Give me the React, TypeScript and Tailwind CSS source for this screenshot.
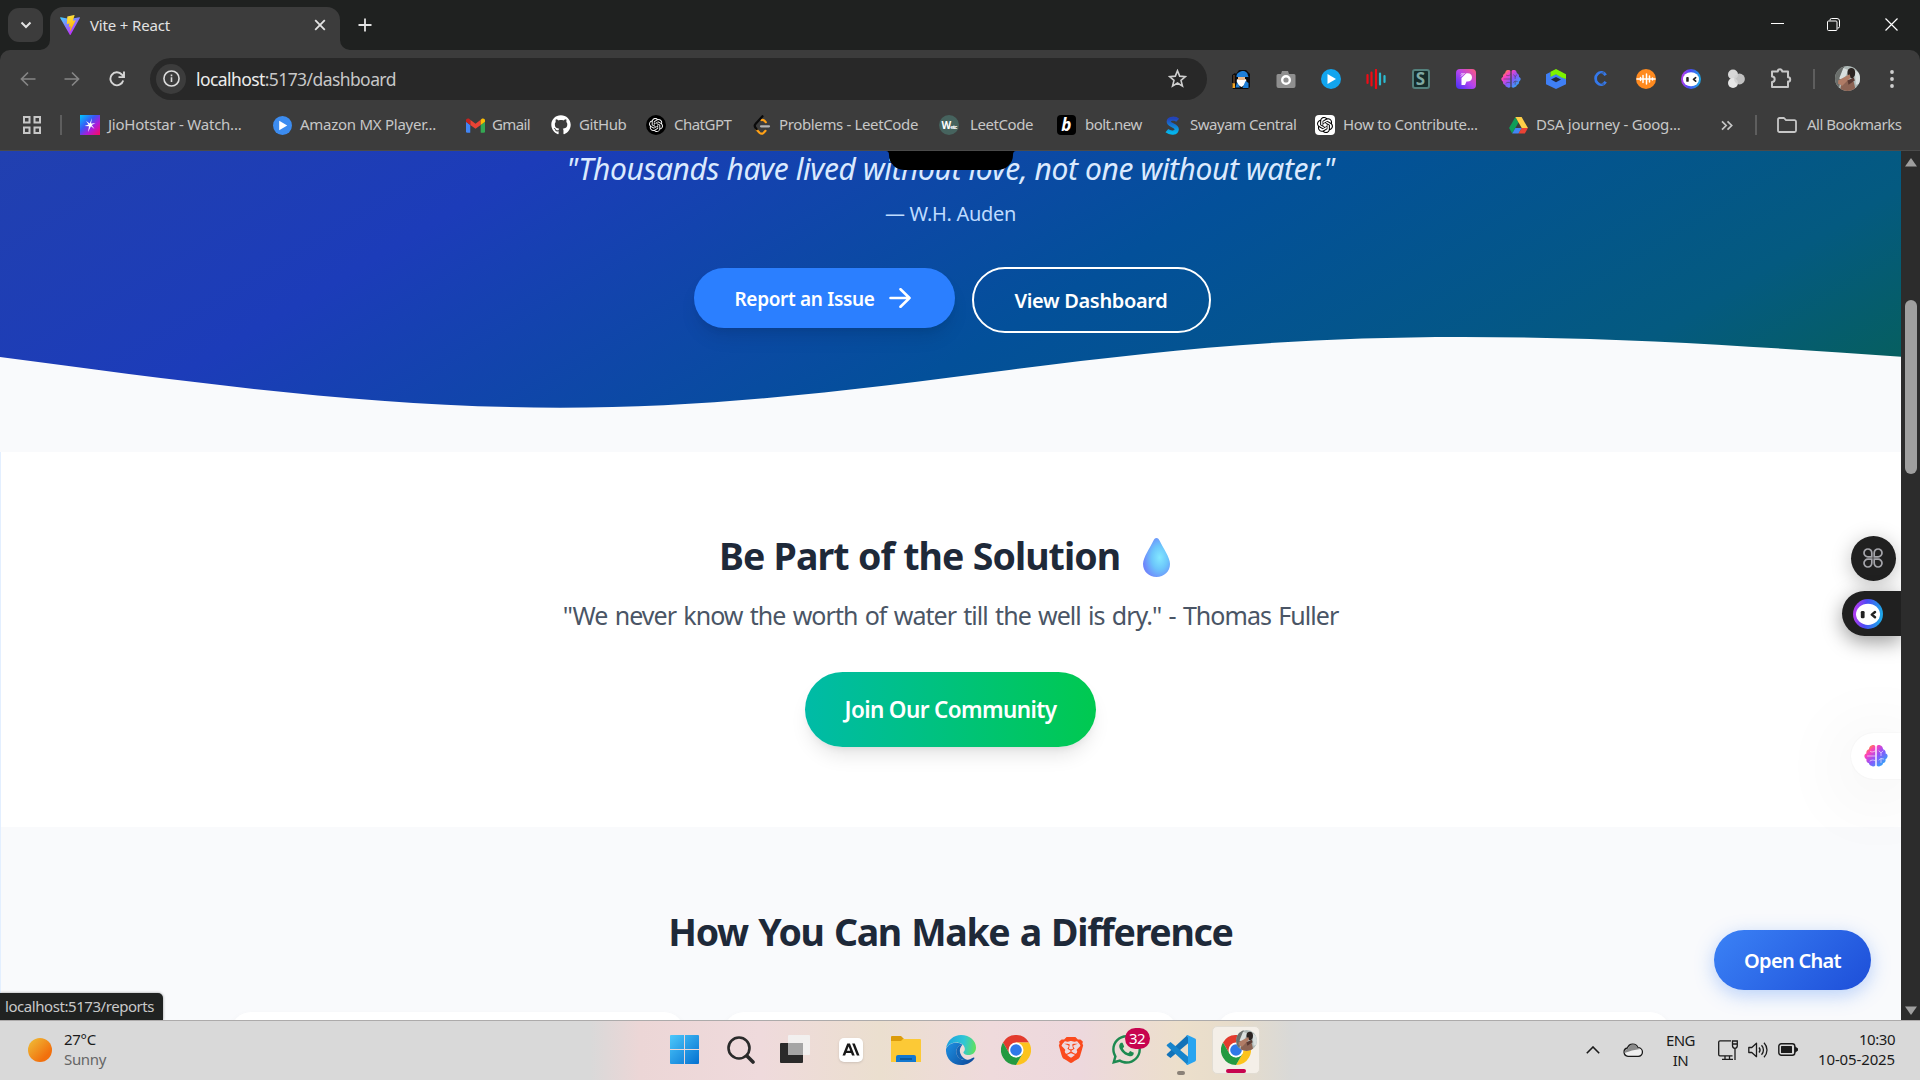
import type { ReactNode } from "react";
import { FaGithub, FaWhatsapp } from "react-icons/fa";
import { SiAnthropic, SiBrave, SiOpenai } from "react-icons/si";

/* ---------- small drawings ---------- */

function ViteLogo() {
  return (
    <svg viewBox="0 0 32 32" className="h-5 w-5">
      <defs>
        <linearGradient id="vite-a" x1="0" x2="0.6" y1="0" y2="0.9">
          <stop offset="0" stopColor="#41d1ff" />
          <stop offset="1" stopColor="#bd34fe" />
        </linearGradient>
        <linearGradient id="vite-b" x1="0.4" x2="0.6" y1="0" y2="1">
          <stop offset="0" stopColor="#ffea83" />
          <stop offset="0.1" stopColor="#ffdd35" />
          <stop offset="1" stopColor="#ffa800" />
        </linearGradient>
      </defs>
      <path fill="url(#vite-a)" d="M31.8 4.9 17 31.4a.9.9 0 0 1-1.4 0L.3 4.9a.8.8 0 0 1 .9-1.2L16 6.3l14.9-2.6a.8.8 0 0 1 .9 1.2Z" />
      <path fill="url(#vite-b)" d="M22.6.1 12 2.2a.4.4 0 0 0-.3.4L11 13.900a.4.4 0 0 0 .5.4l3-.7a.4.4 0 0 1 .5.5l-.9 4.300a.4.4 0 0 0 .5.5l1.900-.6a.4.4 0 0 1 .5.5l-1.400 6.800c-.1.4.5.7.7.3l8.500-16.900a.4.4 0 0 0-.4-.6l-3.100.6a.4.4 0 0 1-.5-.5L23.200.6a.4.4 0 0 0-.6-.5Z" />
    </svg>
  );
}

function Brain({ className, fold }: { className: string; fold: string }) {
  return (
    <svg viewBox="0 0 24 24" className={className}>
      <defs>
        <linearGradient id="brain" x1="0.1" x2="0.95" y1="0.05" y2="0.9">
          <stop offset="0" stopColor="#ff9a1f" />
          <stop offset="0.25" stopColor="#fb3fc0" />
          <stop offset="0.55" stopColor="#8a55fb" />
          <stop offset="1" stopColor="#22b4f8" />
        </linearGradient>
      </defs>
      <path
        fill="url(#brain)"
        d="M11.300 2.500v19c-.8 1.200-2.900 1.400-4 .2-1-.2-2.200-1-2.300-2.500C3 18.900 2 17.200 2.500 15.300 1.300 14.600.4 13.500.4 12c0-1.400 1-2 2-2.400C2 7.500 3 5.900 4.900 5.200 5.200 3 6.300 1.500 8 1.200c1.500-.3 2.900.1 3.300 1.300ZM12.700 2.500v19c.8 1.200 2.900 1.400 4 .2 1-.2 2.200-1 2.300-2.500 2-.3 3-2 2.500-3.900 1.200-.7 2.100-1.800 2.100-3.300 0-1.400-1-2-2-2.400.4-2.100-.6-3.700-2.500-4.400C18.800 3 17.700 1.500 16 1.200c-1.500-.3-2.900.1-3.300 1.300Z"
      />
      <path fill="none" stroke={fold} strokeOpacity=".75" strokeWidth=".8" strokeLinecap="round" d="M3.500 12h7.500M6.500 7.500c1.500.800 3 .6 4.500-.5M6 17c1.500-1.200 3-1.200 5-.5M15 7l2 1.800L19 7M17 9v2.500M15 16l2-1.500 2.500.5M17 15v3.500" />
    </svg>
  );
}

function Robot({ className }: { className: string }) {
  return (
    <svg viewBox="0 0 30 30" className={className}>
      <defs>
        <linearGradient id="robot" x1="0.05" x2="0.9" y1="0.75" y2="0.85">
          <stop offset="0" stopColor="#a93df0" />
          <stop offset="0.4" stopColor="#4a4af5" />
          <stop offset="1" stopColor="#1fa4e8" />
        </linearGradient>
      </defs>
      <circle cx="15" cy="15" r="15" fill="url(#robot)" />
      <ellipse cx="15" cy="15.300" rx="12" ry="10.600" fill="#fff" />
      <rect x="7.800" y="12" width="3.800" height="7.200" rx="1.300" fill="#222" />
      <path d="M22 13 18.800 15.600l3.200 2.600" fill="none" stroke="#222" strokeWidth="2.500" strokeLinejoin="round" strokeLinecap="round" />
    </svg>
  );
}

function ChromeLogo() {
  return (
    <svg viewBox="0 0 48 48" className="h-[30px] w-[30px]">
      <path fill="#e33b2e" d="M3.200 12A24 24 0 0 1 44.800 12H24L13.600 30Z" />
      <path fill="#fcc31e" d="M44.800 12A24 24 0 0 1 24 48L34.400 30 24 12Z" />
      <path fill="#249a41" d="M24 48A24 24 0 0 1 3.200 12L13.600 30 24 36l10.400-6Z" />
      <circle cx="24" cy="24" r="12" fill="#fff" />
      <circle cx="24" cy="24" r="9.300" fill="#2f79e8" />
    </svg>
  );
}

function Portrait({ className }: { className: string }) {
  return (
    <svg viewBox="0 0 24 24" className={className}>
      <defs>
        <clipPath id="portrait">
          <circle cx="12" cy="12" r="12" />
        </clipPath>
      </defs>
      <g clipPath="url(#portrait)">
        <rect width="24" height="24" fill="#aeb8b6" />
        <path fill="#6b6f6c" d="M0 0h9L3 24H0Z" />
        <path fill="#d9dfde" d="M8 2 4 12l4 2 5-10ZM19 4l5 3v10l-4 1Z" />
        <path fill="#8c6353" d="M5 24c0-6 3-10 7-11l6 2 2 9Z" />
        <path fill="#2b2422" d="M12 6c0-3 2-4 4-4 3 0 4 4 3 7l-2 3-3-1c-2-1-2-3-2-5Z" />
        <path fill="#b07c66" d="M3 14 14 8l1 3-8 8-4-2Z" />
        <path fill="#5a3a33" d="m12 14 6-3 1 3-6 4Z" />
      </g>
    </svg>
  );
}

/* ---------- browser chrome ---------- */

function TabStrip() {
  return (
    <div className="flex h-[50px] shrink-0 items-start bg-[#1f2120] text-[#e3e3e3]">
      <div className="ml-2 mt-2 flex h-[34px] w-[35px] items-center justify-center rounded-[11px] bg-[#3c3c3c]">
        <svg viewBox="0 0 12 12" className="h-3 w-3" fill="none" stroke="currentColor" strokeWidth="2">
          <path d="m1.500 3.500 4.500 4.500 4.500-4.500" />
        </svg>
      </div>
      <svg viewBox="0 0 10 10" className="ml-[-3px] mt-10 h-[10px] w-[10px]">
        <path fill="#3c3c3c" d="M10 0v10H0A10 10 0 0 0 10 0Z" />
      </svg>
      <div className="mt-[7px] flex h-[43px] w-[290px] items-start rounded-t-[13px] bg-[#3c3c3c] pl-[10px] pt-[8px]">
        <ViteLogo />
        <span className="ml-[10px] w-[224px] shrink-0 text-[15px] leading-[21px] tracking-[-0.16px]">Vite + React</span>
        <svg viewBox="0 0 12 12" className="mt-[4px] h-3 w-3 shrink-0" stroke="currentColor" strokeWidth="1.800">
          <path d="m1.200 1.200 9.600 9.600M10.800 1.200 1.200 10.800" />
        </svg>
      </div>
      <svg viewBox="0 0 10 10" className="mt-10 h-[10px] w-[10px]">
        <path fill="#3c3c3c" d="M0 0v10h10A10 10 0 0 1 0 0Z" />
      </svg>
      <svg viewBox="0 0 14 14" className="ml-[8px] mt-[18px] h-[14px] w-[14px]" stroke="currentColor" strokeWidth="1.800">
        <path d="M7 .5v13M.5 7h13" />
      </svg>
      <div className="ml-auto mr-[22px] mt-[18px] flex h-[13px] items-center gap-[44px] text-white">
        <svg viewBox="0 0 13 13" className="h-[13px] w-[13px]" fill="none" stroke="currentColor">
          <path d="M0 5.500h13" />
        </svg>
        <svg viewBox="0 0 13 13" className="ml-[-1px] mr-[1px] h-[13px] w-[13px]" fill="none" stroke="currentColor">
          <rect x=".5" y="3" width="9.500" height="9.500" rx="1" />
          <path d="M3 2.500V2A1.500 1.500 0 0 1 4.500.5H10A2.500 2.500 0 0 1 12.500 3v5.500A1.500 1.500 0 0 1 11 10h-.5" />
        </svg>
        <svg viewBox="0 0 13 13" className="h-[13px] w-[13px]" fill="none" stroke="currentColor" strokeWidth="1.200">
          <path d="m.5.5 12 12M12.500.5l-12 12" />
        </svg>
      </div>
    </div>
  );
}

const extensions: ReactNode[] = [
  <svg key="wizard" viewBox="0 0 20 20" className="h-5 w-5">
    <path fill="#0b0b0d" d="M5 5 8 1h7l4 4v13l-2 2H2l-1-3V6l3-2Z" />
    <path fill="#1e7fd8" d="M5.500 7c0-3 4-5 7-5 2 0 4 2 4 3l1 3H5.500Z" />
    <path fill="#e8b88a" d="M7 8h7v3H7Z" />
    <path fill="#fff" d="m6 10 2 1h5l2-1c1 4-1 6-4.500 8C7 16 5 14 6 10Z" />
    <path fill="#1e7fd8" d="m14.500 12 3 2v5h-6ZM6 13l-1.500 5.500H9Z" />
    <path fill="#f5a623" d="M1.500 14H4v5H1.500Z" />
    <path stroke="#8a5a33" strokeWidth="1" d="M3 6v9" />
  </svg>,
  <svg key="camera" viewBox="0 0 20 20" className="h-5 w-5">
    <path fill="#8f8f8f" d="M2 5h3l1-3h6l1 3h5a1.500 1.500 0 0 1 1.500 1.500V17a2 2 0 0 1-2 2h-15a2 2 0 0 1-2-2V6.500A1.500 1.500 0 0 1 2 5Z" />
    <circle cx="10" cy="11" r="3.800" fill="#8f8f8f" stroke="#fff" strokeWidth="2.400" />
  </svg>,
  <svg key="play" viewBox="0 0 20 20" className="h-5 w-5">
    <circle cx="10" cy="10" r="10" fill="#12a5ee" />
    <path fill="#fff" d="m6.500 5 8.500 5-8.500 5Z" />
  </svg>,
  <svg key="bars" viewBox="0 0 20 20" className="h-5 w-5" strokeWidth="2.200" strokeLinecap="round">
    <path stroke="#f00a14" d="M1.500 6v8M5.500 3.500v13M10 1v18" />
    <path stroke="#2bbcd2" d="M14 4.500v11M18.500 7v6" />
  </svg>,
  <div key="s" className="flex h-5 w-[18px] items-center justify-center rounded-[3px] border-2 border-[#53807c] bg-[#152b2a] text-[17px] font-bold leading-none text-[#7fa9a3]">
    S
  </div>,
  <svg key="p" viewBox="0 0 20 20" className="h-5 w-5">
    <defs>
      <linearGradient id="pgrad" x1="0" x2="1" y1="1" y2="0">
        <stop offset="0" stopColor="#4030f5" />
        <stop offset="0.5" stopColor="#b544f0" />
        <stop offset="1" stopColor="#ff5a7a" />
      </linearGradient>
    </defs>
    <rect width="20" height="20" rx="4" fill="url(#pgrad)" />
    <path fill="#fff" d="M5.500 9 10 4.500c4-.8 6 1.200 6 4 0 3-2.500 4.500-5.500 4L9 16H5.500Z" />
    <path stroke="#fff" strokeWidth="1" d="m5 7.500 3.500-3.500M5 5.500 6.500 4" />
  </svg>,
  <Brain key="brain" className="h-5 w-5" fold="#3c3c3c" />,
  <svg key="cube" viewBox="0 0 20 20" className="h-5 w-5">
    <path fill="#3f7ff5" d="M0 5.300 4.500 3v4.500L10 5l10 5v5.200L10 20 0 15.200Z" />
    <path fill="#7df200" d="M4.500 2.800 10 0l10 5.300V10l-4.500-1.500L10 5.300 4.500 8Z" />
    <path fill="#20283c" d="m5 10.500 5-2.500 5 2.500-5 2.800Z" />
  </svg>,
  <svg key="c" viewBox="0 0 16 18" className="h-[17px] w-[15px]">
    <path fill="none" stroke="#3478ea" strokeWidth="3" d="M13.500 5.500A5.800 6.500 0 1 0 13.500 12.500" />
    <path fill="none" stroke="#3c3c3c" strokeWidth=".7" d="M12 3C7 3 5 6 5 9s2 6 7 6" />
  </svg>,
  <svg key="wave" viewBox="0 0 20 20" className="h-5 w-5">
    <circle cx="10" cy="10" r="10" fill="#ff8a1f" />
    <path stroke="#fff" strokeWidth="1.500" strokeLinecap="round" d="M1 10h18M4.500 8.500v3M7 6.500v7M10.500 5v10M13.500 7v6M16.500 9v2" />
  </svg>,
  <Robot key="robot" className="h-5 w-5" />,
  <svg key="blobs" viewBox="0 0 20 20" className="h-5 w-5">
    <circle cx="7" cy="5.500" r="5" fill="#d8d8d8" />
    <circle cx="7" cy="14" r="5" fill="#e6e6e6" />
    <circle cx="13.500" cy="10" r="5.400" fill="#cfcfcf" fillOpacity=".9" />
  </svg>,
  <svg key="puzzle" viewBox="0 0 22 22" className="mt-[-2px] h-[22px] w-[22px]" fill="none" stroke="#c7c7c7" strokeWidth="2">
    <path strokeLinejoin="round" d="M2 4.500h5.800a2.200 2.200 0 0 1 4.400 0H18v5.700a2.200 2.200 0 0 1 0 4.400V20H2v-5a2.700 2.700 0 0 0 0-5.400Z" />
  </svg>,
];

function Toolbar() {
  return (
    <div className="flex h-[57px] shrink-0 items-center rounded-t-[10px] bg-[#3c3c3c]">
      <svg viewBox="0 0 16 16" className="ml-5 h-4 w-4" fill="none" stroke="#858585" strokeWidth="1.700">
        <path d="M15.500 8H1.500M8 1.500 1.500 8 8 14.500" />
      </svg>
      <svg viewBox="0 0 16 16" className="ml-[28px] h-4 w-4" fill="none" stroke="#858585" strokeWidth="1.700">
        <path d="M.5 8h14M8 1.500 14.500 8 8 14.500" />
      </svg>
      <svg viewBox="0 0 16 16" className="ml-[29px] h-4 w-4" fill="none" stroke="#d6d6d6" strokeWidth="1.900">
        <path d="M14.200 9.500A6.500 6.500 0 1 1 12.800 3.500L15 5.600M15 .5v5.600H9.500" />
      </svg>
      <div className="ml-[25px] flex h-[42px] w-[1057px] items-center rounded-full bg-[#282828] pl-[6px] pr-[20px]">
        <div className="flex h-[30px] w-[30px] items-center justify-center rounded-full bg-[#3c3c3c]">
          <svg viewBox="0 0 18 18" className="h-[17px] w-[17px]" fill="none" stroke="#dcdcdc" strokeWidth="1.700">
            <circle cx="9" cy="9" r="8" />
            <path d="M9 7.800v5M9 4.800v1.800" />
          </svg>
        </div>
        <span className="ml-[10px] text-[17.5px] leading-6 tracking-[-0.58px] text-[#c7c7c7]">
          <span className="text-[#ececec]">localhost</span>:5173/dashboard
        </span>
        <svg viewBox="0 0 20 20" className="ml-auto h-[19px] w-[19px]" fill="none" stroke="#cfcfcf" strokeWidth="1.700">
          <path strokeLinejoin="miter" d="m10 1.800 2.300 5.700 6.100.5-4.700 4 1.500 6-5.200-3.300L4.800 18l1.500-6-4.700-4 6.100-.5Z" />
        </svg>
      </div>
      <div className="ml-[11px] flex">
        {extensions.map((icon, i) => (
          <div key={i} className="flex h-6 w-[45px] items-center justify-center">
            {icon}
          </div>
        ))}
      </div>
      <div className="ml-[10px] h-5 w-[2px] bg-[#5e5e5e]" />
      <Portrait className="ml-[20px] h-[25px] w-[25px]" />
      <svg viewBox="0 0 4 18" className="ml-[30px] h-[18px] w-1" fill="#cfcfcf">
        <circle cx="2" cy="2" r="1.900" />
        <circle cx="2" cy="9" r="1.900" />
        <circle cx="2" cy="16" r="1.900" />
      </svg>
    </div>
  );
}

function Bookmark({ icon, label, size, gap = "mr-2" }: { icon: ReactNode; label: string; size: string; gap?: string }) {
  return (
    <div className={`flex shrink-0 items-center whitespace-nowrap ${size}`}>
      <div className={`flex h-5 w-5 shrink-0 items-center justify-center ${gap}`}>{icon}</div>
      <span className="mt-[-2px]">{label}</span>
    </div>
  );
}

function BookmarksBar() {
  return (
    <div className="flex h-[44px] shrink-0 items-start border-b border-[#4a4a4a] bg-[#3c3c3c] pl-[23px] pt-[8px] text-[15px] leading-5 text-[#c7c7c7]">
      <svg viewBox="0 0 18 18" className="mt-[1px] h-[18px] w-[18px]" fill="none" stroke="#c7c7c7" strokeWidth="2">
        <path d="M1 1h5.500v5.500H1zM11.500 1H17v5.500h-5.500zM1 11.500h5.500V17H1zM11.500 11.500H17V17h-5.500z" />
      </svg>
      <div className="ml-[19px] h-5 w-[2px] bg-[#5e5e5e]" />
      <div className="ml-[18px] flex">
        <Bookmark
          label="JioHotstar - Watch..."
          size="w-[192px] tracking-[-0.24px]"
          icon={
            <svg viewBox="0 0 20 20" className="h-5 w-5">
              <defs>
                <linearGradient id="jio" x1="0" x2="1" y1="0" y2="1">
                  <stop offset="0" stopColor="#00c8ff" />
                  <stop offset="0.4" stopColor="#3a55f5" />
                  <stop offset="0.65" stopColor="#b01ad8" />
                  <stop offset="1" stopColor="#ff0a5a" />
                </linearGradient>
              </defs>
              <path fill="url(#jio)" d="M0 0h20v20H0z" />
              <path fill="#fff" d="m12 3-1 5.500 4.500-.3-3.800 1.800L14.500 14 11 11.300 8 17l1-5.800L4.500 11l4-1.500L6 6l3.800 2.500Z" />
            </svg>
          }
        />
        <Bookmark
          label="Amazon MX Player..."
          size="w-[193px] tracking-[-0.26px]"
          icon={
            <svg viewBox="0 0 20 20" className="h-[19px] w-[19px]">
              <circle cx="10" cy="10" r="10" fill="#3c8cf0" />
              <path fill="#fff" d="m6.500 5 8.500 5-8.500 5Z" />
            </svg>
          }
        />
        <Bookmark
          label="Gmail"
          gap="mr-[7px]"
          size="w-[86px] tracking-[-0.6px]"
          icon={
            <svg viewBox="0 0 20 15" className="h-[15px] w-[19px]">
              <path fill="#4285f4" d="M0 3.500 4.500 7v8H1.300A1.300 1.300 0 0 1 0 13.700Z" />
              <path fill="#34a853" d="M20 3.500 15.500 7v8h3.200a1.300 1.300 0 0 0 1.300-1.300Z" />
              <path fill="#ea4335" d="M4.500 1.500 10 5.700l5.500-4.200V7L10 11 4.500 7Z" />
              <path fill="#c5221f" d="M0 3.500V2c0-1.700 2-2.600 3.300-1.500l1.200 1V7Z" />
              <path fill="#fbbc04" d="M20 3.500V2c0-1.700-2-2.600-3.300-1.500l-1.200 1V7Z" />
            </svg>
          }
        />
        <Bookmark label="GitHub" size="w-[95px] tracking-[-0.42px]" icon={<FaGithub className="h-5 w-5 text-white" />} />
        <Bookmark
          label="ChatGPT"
          size="w-[106px] tracking-[-0.52px]"
          icon={
            <div className="flex h-5 w-5 items-center justify-center rounded-full bg-black">
              <SiOpenai className="h-[14px] w-[14px] text-white" />
            </div>
          }
        />
        <Bookmark
          label="Problems - LeetCode"
          gap="mr-[7px]"
          size="w-[187px] tracking-[-0.36px]"
          icon={
            <svg viewBox="0 0 20 20" className="h-5 w-5" fill="none" strokeWidth="2.200" strokeLinecap="round">
              <path stroke="#ffa116" d="m4.500 14.500 3 3.200c1.200 1.100 3 1.100 4.200 0l1.800-1.900M9.500 5c1.200-.5 2-.1 2.800.6l1.500 1.600" />
              <path stroke="#0a0a0a" d="M10.500 1.200 3.700 8.700c-1.200 1.300-1.200 3 0 4.300l1 1.200" />
              <path stroke="#b3b3b3" d="M9 11.300h8" />
            </svg>
          }
        />
        <Bookmark
          label="LeetCode"
          gap="mr-[11px]"
          size="w-[117px] tracking-[-0.43px]"
          icon={
            <div className="flex h-5 w-5 shrink-0 items-center justify-center rounded-full bg-[#46635e] text-[10px] font-bold tracking-[-1px] text-white">
              W<span className="mt-1 text-[6px]">etc</span>
            </div>
          }
        />
        <Bookmark
          label="bolt.new"
          gap="mr-[9px]"
          size="w-[106px] tracking-[-0.52px]"
          icon={
            <div className="flex h-5 w-[19px] items-center justify-center rounded-[4px] bg-black pb-[2px] text-[17px] font-bold italic leading-none text-white">
              b
            </div>
          }
        />
        <Bookmark
          label="Swayam Central"
          size="w-[153px] tracking-[-0.49px]"
          icon={
            <svg viewBox="0 0 16 20" className="h-[19px] w-[15px]">
              <defs>
                <linearGradient id="sway" x1="0" x2="0" y1="0" y2="1">
                  <stop offset="0" stopColor="#2343b8" />
                  <stop offset="1" stopColor="#04b4ec" />
                </linearGradient>
              </defs>
              <path fill="none" stroke="url(#sway)" strokeWidth="4.500" d="M13.500 4.500C11 2 4 2 4 6s8.500 3.500 8.500 8-7 4.500-10.500 1.500" />
            </svg>
          }
        />
        <Bookmark
          label="How to Contribute..."
          size="w-[193px] tracking-[-0.35px]"
          icon={
            <div className="flex h-5 w-5 items-center justify-center rounded-[4px] bg-white">
              <SiOpenai className="h-4 w-4 text-black" />
            </div>
          }
        />
        <Bookmark
          label="DSA journey - Goog..."
          size="w-[172px] tracking-[-0.22px]"
          icon={
            <svg viewBox="0 0 20 18" className="h-[17px] w-[19px]">
              <path fill="#0f9d58" d="M6.700 0 10 5.800 3.300 17.500 0 11.700Z" />
              <path fill="#ffcf48" d="M6.700 0h6.600L20 11.700h-6.600Z" />
              <path fill="#4285f4" d="M6.700 11.700h7L10 17.500H3.300Z" />
              <path fill="#ea4335" d="M13.400 11.700H20l-3.300 5.800H10Z" />
            </svg>
          }
        />
      </div>
      <svg viewBox="0 0 12 10" className="ml-[41px] mt-[5px] h-[11px] w-[12px]" fill="none" stroke="#c7c7c7" strokeWidth="1.700">
        <path d="m1 .8 4.200 4.200L1 9.200M6.500.8l4.200 4.200-4.200 4.200" />
      </svg>
      <div className="ml-[22px] h-5 w-[2px] bg-[#5e5e5e]" />
      <svg viewBox="0 0 20 16" className="ml-[20px] mt-[2px] h-4 w-5" fill="none" stroke="#c7c7c7" strokeWidth="1.800">
        <path strokeLinejoin="round" d="M1 2.500A1.500 1.500 0 0 1 2.500 1H7l2 2.200h8.500A1.500 1.500 0 0 1 19 4.700v8.800a1.500 1.500 0 0 1-1.500 1.500h-15A1.500 1.500 0 0 1 1 13.500Z" />
      </svg>
      <span className="ml-[10px] mt-[-1px] whitespace-nowrap tracking-[-0.51px]">All Bookmarks</span>
    </div>
  );
}

/* ---------- page ---------- */

function Hero() {
  return (
    <section className="relative h-[301px] bg-[linear-gradient(149deg,#2140b0_0px,#1c3cb9_285px,#03509a_670px,#045a80_1010px,#065f5e_1165px)]">
      <svg viewBox="0 0 1901 115" preserveAspectRatio="none" className="absolute bottom-0 left-0 h-[115px] w-[1901px]">
        <path fill="#f9fafc" d="M0 20C190 45 370 70.700 560 70.700 720 70.700 860 52 1011 32.700 1160 13.500 1290 0 1462 0c158 0 298 10 439 19.700V115H0Z" />
      </svg>
      <div className="relative flex flex-col items-center">
        <p className="mt-[-2px] whitespace-nowrap text-[30px] italic leading-10 tracking-[-0.4px] text-[#dbeafe]">
          "Thousands have lived without love, not one without water."
        </p>
        <p className="mt-[10px] text-[20px] leading-[30px] tracking-[-0.3px] text-[#bedbff]">— W.H. Auden</p>
        <div className="ml-[3px] mt-[38px] flex items-start gap-[17px] font-semibold text-white">
          <button className="mt-[1px] flex h-[60px] w-[261px] items-center rounded-full bg-[#2b7fff] pl-[40px] text-[19px] tracking-[-0.33px] shadow-[0_12px_19px_-4px_rgba(0,0,0,0.1),0_5px_8px_-5px_rgba(0,0,0,0.1)]">
            <span className="mt-[2px] w-[142px] whitespace-nowrap">Report an Issue</span>
            <svg viewBox="0 0 22 20" className="ml-[13px] h-[20px] w-[22px]" fill="none" stroke="currentColor" strokeWidth="2.600" strokeLinecap="round" strokeLinejoin="round">
              <path d="M1.500 10h19M11.500 1.200 20.500 10l-9 8.800" />
            </svg>
          </button>
          <button className="h-[66px] w-[239px] rounded-full border-2 border-white pt-[1px] text-[20px] tracking-[-0.34px]">View Dashboard</button>
        </div>
      </div>
      <svg viewBox="0 0 130 19" className="absolute left-[886px] top-0 h-[19px] w-[130px]">
        <path d="M0 0h130q-3 0-3 4a15 15 0 0 1-15 15H18A15 15 0 0 1 3 4q0-4-3-4Z" />
      </svg>
    </section>
  );
}

function Solution() {
  return (
    <section className="flex h-[375px] flex-col items-center border-l border-[#e3efff] bg-white pr-px pt-[79px]">
      <h2 className="flex h-[50px] items-center whitespace-nowrap text-[37.5px] font-bold leading-[50px] tracking-[-0.95px] [word-spacing:0.5px] text-[#1e2939]">
        Be Part of the Solution
        <svg viewBox="0 0 29 39" className="ml-[22px] mr-[11px] mt-[2px] h-[39px] w-[29px]">
          <defs>
            <radialGradient id="drop" cx="0.62" cy="0.5" r="0.6">
              <stop offset="0" stopColor="#83e8ff" />
              <stop offset="0.5" stopColor="#6cc6fb" />
              <stop offset="1" stopColor="#6f87fb" />
            </radialGradient>
          </defs>
          <path fill="url(#drop)" d="M14.500 0c1.500 0 2.300 1 3 2.400C20.500 9 28 19 28 26 28 33.500 22 39 14.500 39S1 33.500 1 26C1 19 8.500 9 11.500 2.400 12.200 1 13 0 14.500 0Z" />
        </svg>
      </h2>
      <p className="mt-[14px] whitespace-nowrap text-[25px] leading-10 tracking-[-0.96px] [word-spacing:1.7px] text-[#4a5565]">
        "We never know the worth of water till the well is dry." - Thomas Fuller
      </p>
      <button className="mt-[37px] h-[75px] w-[291px] rounded-full bg-[linear-gradient(90deg,#00bba7,#00c950)] text-[22.5px] font-semibold tracking-[-0.62px] text-white shadow-[0_12px_19px_-4px_rgba(0,0,0,0.1),0_5px_8px_-5px_rgba(0,0,0,0.1)]">
        Join Our Community
      </button>
    </section>
  );
}

function Difference() {
  return (
    <section className="flex h-[193px] flex-col overflow-hidden border-l border-[#e3efff] bg-[#f9fafc] pt-[80px]">
      <h2 className="pr-px text-center text-[37.5px] font-bold leading-[50px] tracking-[-1.3px] [word-spacing:1.8px] text-[#1e2939]">How You Can Make a Difference</h2>
      <div className="mt-[55px] flex gap-10 pl-[230px]">
        {[0, 1, 2].map((n) => (
          <div key={n} className="h-[200px] w-[453px] shrink-0 rounded-[20px] bg-white shadow-[0_4px_8px_rgba(0,0,0,0.06)]" />
        ))}
      </div>
    </section>
  );
}

function FloatingWidgets() {
  return (
    <>
      <div className="absolute left-[1851px] top-[385px] flex h-[45px] w-[45px] items-center justify-center rounded-full bg-[#202020] shadow-[0_4px_20px_rgba(0,0,0,0.25)]">
        <svg viewBox="0 0 20 20" className="mr-[1px] mt-[-1px] h-5 w-5" fill="none" stroke="#a5a5ab" strokeWidth="1.700">
          <path d="M8.800 8.800H5A3.900 3.900 0 1 1 8.800 5ZM11.200 8.800V5A3.900 3.900 0 1 1 15 8.800ZM8.800 11.200V15A3.900 3.900 0 1 1 5 11.200ZM11.200 11.200H15A3.900 3.900 0 1 1 11.200 15Z" />
        </svg>
      </div>
      <div className="absolute left-[1842px] top-[440px] flex h-[45px] w-[59px] items-center rounded-l-full bg-[#202020] pl-[11px] shadow-[0_6px_20px_rgba(0,0,0,0.4)]">
        <Robot className="h-[30px] w-[30px]" />
      </div>
      <div className="absolute left-[1851px] top-[582px] flex h-[46px] w-[50px] items-center rounded-l-full bg-white pl-[13px] shadow-[0_10px_80px_rgba(0,0,0,0.12),0_0_2px_rgba(0,0,0,0.06)]">
        <Brain className="h-6 w-6" fold="#ffffff" />
      </div>
      <button className="absolute left-[1714px] top-[779px] h-[60px] w-[157px] rounded-full bg-[linear-gradient(135deg,#3b82f6,#1d4ed8)] pt-[1px] text-[20px] font-semibold tracking-[-0.7px] text-white shadow-[0_5px_19px_rgba(59,130,246,0.35)]">
        Open Chat
      </button>
      <div className="absolute bottom-0 left-0 h-[27px] w-[163px] rounded-tr-[5px] bg-[#202221] pl-[5px] text-[15px] leading-[26px] tracking-[-0.44px] text-[#c9c9c9] shadow-[0_0_3px_rgba(0,0,0,0.4)]">
        localhost:5173/reports
      </div>
    </>
  );
}

function Scrollbar() {
  return (
    <div className="flex w-[19px] flex-col items-center bg-[#2c2c2c]">
      <svg viewBox="0 0 12 9" className="mt-[7px] h-[9px] w-3" fill="#9f9f9f">
        <path d="M6 0 12 8.500H0Z" />
      </svg>
      <div className="mt-[133px] h-[174px] w-3 rounded-full bg-[#9f9f9f]" />
      <svg viewBox="0 0 12 9" className="mb-[5px] mt-auto h-[9px] w-3" fill="#9f9f9f">
        <path d="M6 9 12 .5H0Z" />
      </svg>
    </div>
  );
}

/* ---------- taskbar ---------- */

const taskIcons: ReactNode[] = [
  <svg key="win" viewBox="0 0 30 30" className="h-[29px] w-[29px]">
    <defs>
      <linearGradient id="win" x1="0" x2="1" y1="0" y2="1">
        <stop offset="0" stopColor="#4cc8fb" />
        <stop offset="1" stopColor="#0470d0" />
      </linearGradient>
    </defs>
    <path fill="url(#win)" d="M0 1a1 1 0 0 1 1-1h13.500v14.500H0ZM15.500 0H29a1 1 0 0 1 1 1v13.500H15.500ZM0 15.500h14.500V30H1a1 1 0 0 1-1-1ZM15.500 15.500H30V29a1 1 0 0 1-1 1H15.500Z" />
  </svg>,
  <svg key="search" viewBox="0 0 28 28" className="ml-[3px] h-7 w-7" fill="none" stroke="#2a2a2a" strokeLinecap="round">
    <circle cx="12" cy="12" r="10.500" strokeWidth="2.600" />
    <path strokeWidth="3.600" d="m20 20 6 6" />
  </svg>,
  <svg key="task" viewBox="0 0 30 29" className="h-[29px] w-[30px]">
    <rect x="0" y="8" width="23" height="20" rx="1" fill="#2a2a2a" />
    <rect x="8" y="0" width="22" height="20" rx="1" fill="#f2f2f2" fillOpacity=".9" />
    <path d="M8 8h15v12H8z" fill="#a5a5a5" />
  </svg>,
  <div key="ai" className="ml-[1px] flex h-6 w-6 items-center justify-center rounded-[5px] bg-white shadow-sm">
    <SiAnthropic className="h-[17px] w-[18px] text-[#181818]" />
  </div>,
  <svg key="files" viewBox="0 0 30 27" className="ml-[1px] h-[27px] w-[30px]">
    <path fill="#dc9c0a" d="M0 1a1 1 0 0 1 1-1h9l3 3-3 3H0Z" />
    <path fill="#fcc936" d="M0 5h10l2-2h17a1 1 0 0 1 1 1v22H0Z" />
    <path fill="#1278d0" d="M5 26v-5a2 2 0 0 1 2-2h16a2 2 0 0 1 2 2v5Z" />
    <path stroke="#08508f" strokeWidth="1.500" d="M9 23h12" />
  </svg>,
  <svg key="edge" viewBox="0 0 30 30" className="h-[30px] w-[30px]">
    <defs>
      <linearGradient id="edge-a" x1="0" x2="1" y1="0.3" y2="0.4">
        <stop offset="0" stopColor="#1ba1e0" />
        <stop offset="0.6" stopColor="#30c6d6" />
        <stop offset="1" stopColor="#5fe15f" />
      </linearGradient>
      <linearGradient id="edge-b" x1="0" x2="1" y1="0.4" y2="1">
        <stop offset="0" stopColor="#1b86d8" />
        <stop offset="1" stopColor="#0b4496" />
      </linearGradient>
    </defs>
    <path fill="url(#edge-a)" d="M0 14C1 5 8 0 15 0c9 0 15 6 15 12.500 0 5-3.500 7.500-7.500 7.500-3.500 0-5.500-1.500-5-3 1-1 1.500-2 1.300-3.500C18.500 9 13 7 9 7.500 5 8 1.500 10 0 14Z" />
    <path fill="url(#edge-b)" d="M0 14c1.500-4 5.500-6.300 10-6.300 3 0 5 .9 6.500 2C13 10 10 13 10.300 17.500 10.700 22 15 25.500 20 25c3 0 5.500-1.500 7.500-2.500.8-.3 1.300.3.800 1C25.500 27.500 21 30 15 30 6 30-.5 23 0 14Z" />
    <path fill="#1464b4" d="M10.300 17.500C10 13 13 10 16.500 9.700c-2 2-3.500 5-2 9 1 2.800 3.500 5.300 7 6.300C16 26 10.700 22.500 10.300 17.500Z" />
  </svg>,
  <ChromeLogo key="chrome" />,
  <SiBrave key="brave" className="h-[30px] w-[26px] scale-x-110 text-[#fb4a1e]" />,
  <div key="wa" className="relative">
    <FaWhatsapp className="h-[33px] w-[33px] text-[#1d8a50]" />
    <div className="absolute left-[15px] top-[-5px] flex h-[21px] w-[25px] items-center justify-center rounded-full bg-[#c7044f] text-[15px] leading-none tracking-[-0.6px] text-white">
      32
    </div>
  </div>,
  <div key="code" className="relative">
    <svg viewBox="0 0 30 30" className="h-[30px] w-[30px]">
      <path fill="#1272b8" d="M21.500 0 23 7.500 4.500 23 1.200 20.500c-.7-.6-.7-1.200 0-1.800Z" />
      <path fill="#1684cc" d="M21.500 30 23 22.500 4.500 7 1.200 9.500c-.7.600-.7 1.200 0 1.800Z" />
      <path fill="#28a4f0" d="M21.500 0 29 3.500a1.800 1.800 0 0 1 1 1.700v19.600a1.800 1.800 0 0 1-1 1.700L21.500 30c-.8.300-1 0-.8-.8l1.300-1.700v-25L20.700.8c-.2-.6 0-1.100.8-.8Z" />
    </svg>
    <div className="absolute bottom-[-10px] left-[11px] h-1 w-2 rounded-full bg-[#8a8177]" />
  </div>,
  <div key="profile" className="relative mr-[1px] mt-[1px] flex h-[48px] w-[48px] items-center justify-center rounded-[5px] border border-[#e2ddd3] bg-[#f4efe8]">
    <ChromeLogo />
    <Portrait className="absolute right-[2px] top-[3px] h-[21px] w-[21px]" />
    <div className="absolute bottom-0 left-[13px] h-1 w-5 rounded-full bg-[#c7044f]" />
  </div>,
];

function Taskbar() {
  return (
    <div className="flex h-[60px] shrink-0 items-center border-t border-[#adabab] bg-[linear-gradient(90deg,#d9d9d9_590px,#ecd6d6_640px,#efdadc_760px,#ebdfcf_880px,#efdadc_990px,#edd8dd_1080px,#ecdfcb_1180px,#e6dccb_1240px,#d9d9d7_1290px,#d9d9d9_1300px)] pb-[2px] text-[15px] text-[#1b1b1b]">
      <div className="ml-[28px] h-6 w-6 rounded-full bg-[linear-gradient(135deg,#efc23a,#f2700d_75%)]" />
      <div className="ml-[12px] mt-[-2px] w-[593px] leading-[20px]">
        <div className="tracking-[-0.27px]">27°C</div>
        <div className="tracking-[-0.34px] text-[#666]">Sunny</div>
      </div>
      <div className="flex">
        {taskIcons.map((icon, i) => (
          <div key={i} className="flex h-[58px] w-[55.200px] items-center justify-center">
            {icon}
          </div>
        ))}
      </div>
      <svg viewBox="0 0 14 8" className="ml-auto h-2 w-[14px]" fill="none" stroke="currentColor" strokeWidth="1.600">
        <path d="M.8 7.200 7 1l6.200 6.200" />
      </svg>
      <svg viewBox="0 0 20 14" className="ml-[23px] h-[14px] w-5" stroke="#1b1b1b" strokeWidth="1.300">
        <path fill="#f0f0f0" d="M5 13.300a4.200 4.200 0 0 1-.6-8.300A5.700 5.700 0 0 1 15 4.700a4.300 4.300 0 0 1 .3 8.600Z" />
        <path fill="#8a8a8a" stroke="none" d="M1.500 10c0-3 1.500-4 3.500-4.300C6 2.500 8 1.300 10 1.300c2.200 0 4 1.500 4.600 3.700L17 6 9 7.500Z" />
      </svg>
      <div className="ml-[22px] mr-[1px] w-[31px] text-center leading-[20px] tracking-[-0.56px]">
        <div>ENG</div>
        <div>IN</div>
      </div>
      <svg viewBox="0 0 20 20" className="ml-[21px] h-5 w-5" fill="none" stroke="currentColor" strokeWidth="1.300">
        <path d="M13 .8H2A1.300 1.300 0 0 0 .7 2v12.500A1.300 1.300 0 0 0 2 15.800h12.500M7 16v3M11.500 16v3M4 19.300h11M17 9v11M14.500 1h4.800v4.500c0 1.500-1 2.800-2.400 2.800s-2.400-1.300-2.400-2.800ZM14.500 4h4.800" />
      </svg>
      <svg viewBox="0 0 20 16" className="ml-[10px] h-4 w-5" fill="none" stroke="currentColor" strokeWidth="1.300">
        <path strokeLinejoin="round" d="M.8 5.500h3L8.500 1.300v13.400L3.800 10.500h-3ZM11 5.500c1.300 1.500 1.300 3.500 0 5M13.500 3.300c2.600 2.700 2.600 6.700 0 9.400M16 .8c4 4.300 4 10.100 0 14.400" />
      </svg>
      <svg viewBox="0 0 20 13" className="ml-[10px] h-[13px] w-5" fill="none" stroke="currentColor" strokeWidth="1.400">
        <rect x=".8" y=".8" width="16" height="11.400" rx="2.500" />
        <rect x="3" y="3" width="11" height="7" rx=".5" fill="currentColor" stroke="none" />
        <path d="M17.500 4.500 20 6.500l-2.500 2Z" fill="currentColor" />
      </svg>
      <div className="ml-[19px] mr-[25px] mt-[-2px] w-[78px] text-right leading-[20px]">
        <div className="tracking-[-0.47px]">10:30</div>
        <div className="tracking-[-0.13px]">10-05-2025</div>
      </div>
    </div>
  );
}

export default function App() {
  return (
    <div className="flex h-[1080px] w-[1920px] flex-col overflow-hidden bg-[#1f2120] font-['Noto_Sans','Open_Sans',sans-serif]">
      <TabStrip />
      <Toolbar />
      <BookmarksBar />
      <div className="flex h-[869px] shrink-0">
        <main className="relative w-[1901px] overflow-hidden bg-white">
          <Hero />
          <Solution />
          <Difference />
          <FloatingWidgets />
        </main>
        <Scrollbar />
      </div>
      <Taskbar />
    </div>
  );
}
